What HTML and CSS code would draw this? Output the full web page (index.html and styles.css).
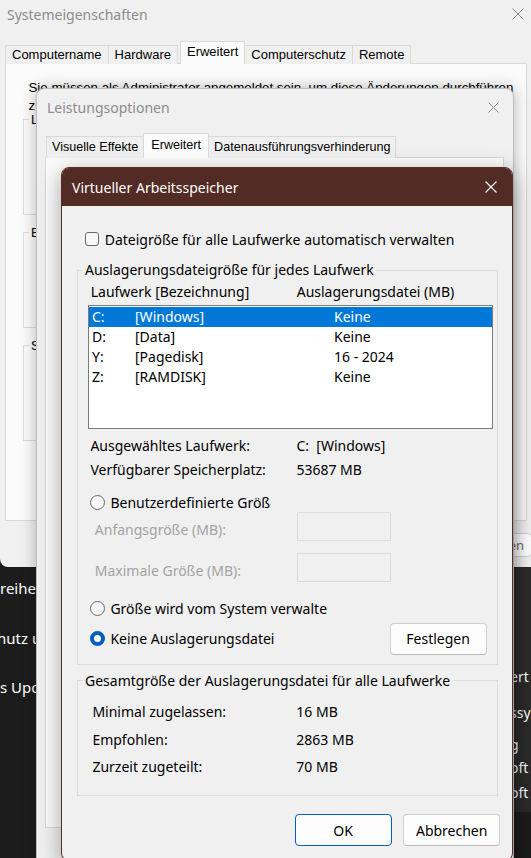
FILE: index.html
```html
<!DOCTYPE html>
<html lang="de">
<head>
<meta charset="utf-8">
<title>Virtueller Arbeitsspeicher</title>
<link rel="stylesheet" href="styles.css">
</head>
<body>
<div class="desk-left">
  <div class="dl-line">reihe</div>
  <div class="dl-line shift">hutz u</div>
  <div class="dl-line">s Upo</div>
</div>
<div class="desk-right">
  <div class="dr-panel">
    <div class="dr-line l1">ert</div>
    <div class="dr-line l2">ssy</div>
    <div class="dr-line l3">g</div>
    <div class="dr-line l4">oft</div>
    <div class="dr-line l5">oft</div>
  </div>
</div>

<div class="w1">
  <div class="w1-title">
    <span>Systemeigenschaften</span>
    <svg class="xicon" width="12" height="12" viewBox="0 0 12 12"><path d="M0.5 0.5L11.5 11.5M11.5 0.5L0.5 11.5" stroke="currentColor" stroke-width="1" fill="none"/></svg>
  </div>
  <div class="tabs w1-tabs">
    <div class="tab">Computername</div>
    <div class="tab">Hardware</div>
    <div class="tab sel">Erweitert</div>
    <div class="tab">Computerschutz</div>
    <div class="tab">Remote</div>
  </div>
  <div class="w1-panel">
    <p class="w1-note">Sie müssen als Administrator angemeldet sein, um diese Änderungen durchführen<br>zu</p>
    <fieldset class="w1-gb"><legend>L</legend></fieldset>
    <fieldset class="w1-gb"><legend>E</legend></fieldset>
    <fieldset class="w1-gb"><legend>S</legend></fieldset>
  </div>
  <div class="w1-buttons"><div class="w1-btn">Übernehmen</div></div>
</div>

<div class="w2">
  <div class="w2-title">
    <span>Leistungsoptionen</span>
    <svg class="xicon" width="11" height="11" viewBox="0 0 11 11"><path d="M0.5 0.5L10.5 10.5M10.5 0.5L0.5 10.5" stroke="currentColor" stroke-width="1" fill="none"/></svg>
  </div>
  <div class="tabs w2-tabs">
    <div class="tab">Visuelle Effekte</div>
    <div class="tab sel">Erweitert</div>
    <div class="tab">Datenausführungsverhinderung</div>
  </div>
  <div class="w2-panel"></div>
</div>

<div class="w3">
  <div class="w3-title">
    <span>Virtueller Arbeitsspeicher</span>
    <svg class="xicon" width="12" height="12" viewBox="0 0 12 12"><path d="M0.5 0.5L11.5 11.5M11.5 0.5L0.5 11.5" stroke="currentColor" stroke-width="1.1" fill="none"/></svg>
  </div>
  <div class="w3-body">
    <div class="chk-row"><span class="checkbox"></span><span>Dateigröße für alle Laufwerke automatisch verwalten</span></div>

    <fieldset class="gb gb1">
      <legend>Auslagerungsdateigröße für jedes Laufwerk</legend>
      <div class="gb1-in">
        <div class="lv-head"><span class="c1">Laufwerk [Bezeichnung]</span><span>Auslagerungsdatei (MB)</span></div>
        <div class="listbox">
          <div class="lv-row sel"><span class="d">C:</span><span class="n">[Windows]</span><span>Keine</span></div>
          <div class="lv-row"><span class="d">D:</span><span class="n">[Data]</span><span>Keine</span></div>
          <div class="lv-row"><span class="d">Y:</span><span class="n">[Pagedisk]</span><span>16 - 2024</span></div>
          <div class="lv-row"><span class="d">Z:</span><span class="n">[RAMDISK]</span><span>Keine</span></div>
        </div>
        <div class="info">
          <div class="kv"><span class="k">Ausgewähltes Laufwerk:</span><span>C:&nbsp; [Windows]</span></div>
          <div class="kv"><span class="k">Verfügbarer Speicherplatz:</span><span>53687 MB</span></div>
        </div>
        <div class="radio-row r1"><span class="radio"></span><span>Benutzerdefinierte Größe:</span></div>
        <div class="size-row"><span class="lbl">Anfangsgröße (MB):</span><span class="inp"></span></div>
        <div class="size-row s2"><span class="lbl">Maximale Größe (MB):</span><span class="inp"></span></div>
        <div class="radio-row r2"><span class="radio"></span><span>Größe wird vom System verwaltet</span></div>
        <div class="opt3">
          <div class="radio-row"><span class="radio on"></span><span>Keine Auslagerungsdatei</span></div>
          <div class="btn set">Festlegen</div>
        </div>
      </div>
    </fieldset>

    <fieldset class="gb gb2">
      <legend>Gesamtgröße der Auslagerungsdatei für alle Laufwerke</legend>
      <div class="gb2-in">
        <div class="kv"><span class="k">Minimal zugelassen:</span><span>16 MB</span></div>
        <div class="kv"><span class="k">Empfohlen:</span><span>2863 MB</span></div>
        <div class="kv"><span class="k">Zurzeit zugeteilt:</span><span>70 MB</span></div>
      </div>
    </fieldset>

    <div class="dlg-btns">
      <div class="btn default">OK</div>
      <div class="btn">Abbrechen</div>
    </div>
  </div>
</div>
</body>
</html>
```

FILE: styles.css
```css
* { box-sizing: border-box; }
html, body { margin: 0; padding: 0; }
body {
  position: relative;
  width: 531px;
  height: 858px;
  overflow: hidden;
  background: #1c1c1c;
  font-family: "Noto Sans", "Open Sans", sans-serif;
  font-size: 14px;
  color: #000;
}

/* background desktop app (dark) */
.desk-left {
  position: absolute;
  left: 0;
  top: 567px;
  width: 40px;
  height: 291px;
  padding-top: 11px;
  color: #fff;
  font-size: 15px;
  line-height: 20px;
  white-space: nowrap;
  overflow: hidden;
}
.dl-line { height: 49.5px; }
.dl-line.shift { margin-left: -3px; }

.desk-right {
  position: absolute;
  left: 505px;
  top: 567px;
  width: 26px;
  height: 291px;
  background: #1c1c1c;
}
.dr-panel {
  height: 245px;
  background: #2b2b2b;
  padding: 100px 0 0 5px;
  color: #fff;
  font-size: 14px;
  line-height: 20px;
  white-space: nowrap;
  overflow: hidden;
}
.dr-line.l2 { margin-top: 16px; }
.dr-line.l3 { margin-top: 12px; }
.dr-line.l4 { margin-top: 3px; }
.dr-line.l5 { margin-top: 5px; }

/* generic */
.xicon { display: block; flex: none; }
.tabs { display: flex; align-items: flex-end; }
.tab {
  height: 19px;
  line-height: 18px;
  padding: 0 6px;
  border: 1px solid #d9d9d9;
  border-bottom: 0;
  background: #f0f0f0;
  margin-left: -1px;
  white-space: nowrap;
  font-family: "Liberation Sans", Arial, sans-serif;
}
.tab:first-child { margin-left: 0; }
.tab.sel {
  position: relative;
  z-index: 1;
  height: 23px;
  line-height: 20px;
  background: #fbfbfb;
  margin-left: 2px;
}

/* window 1: Systemeigenschaften */
.w1 {
  position: absolute;
  left: 0;
  top: 0;
  width: 540px;
  height: 567px;
  background: #f0f0f0;
  border-radius: 0 0 8px 8px;
  font-family: "Liberation Sans", Arial, sans-serif;
  font-size: 13px;
}
.w1-title {
  height: 28px;
  display: flex;
  align-items: center;
  justify-content: space-between;
  padding: 0 16px 0 7px;
  color: #8c8c8c;
  font-family: "Noto Sans", sans-serif;
  font-size: 14px;
}
.w1-tabs { margin: 13px 0 -1px 5px; height: 23px; font-size: 13px; }
.w1-panel {
  margin: 0 13px 0 5px;
  height: 458px;
  border: 1px solid #d9d9d9;
  background: #fbfbfb;
  padding: 15px 0 0 17px;
}
.w1-note {
  margin: 0 0 -13.5px 5.5px;
  line-height: 18px;
  font-size: 13.3px;
  white-space: nowrap;
}
.w1-gb {
  margin: 10px 0 0 0;
  padding: 0;
  width: 480px;
  height: 103px;
  border: 1px solid #dcdcdc;
  min-inline-size: 0;
}
.w1-gb legend { margin-left: 5px; padding: 0 2px; line-height: 15px; font-size: 13px; }
.w1-buttons { display: flex; justify-content: flex-end; padding: 12px 8px 0 0; }
.w1-btn {
  width: 90px;
  height: 24px;
  border: 1px solid #d0d0d0;
  border-radius: 4px;
  background: #fdfdfd;
  text-align: right;
  padding-right: 9px;
  line-height: 22px;
  color: #6a6a6a;
  font-family: "Noto Sans", sans-serif;
  font-size: 13px;
}

/* window 2: Leistungsoptionen */
.w2 {
  position: absolute;
  left: 36px;
  top: 88px;
  width: 478px;
  height: 800px;
  background: #f0f0f0;
  border: 1px solid #bdbdbd;
  border-radius: 8px;
  box-shadow: 0 0 16px rgba(0, 0, 0, 0.28);
}
.w2-title {
  height: 36px;
  display: flex;
  align-items: center;
  justify-content: space-between;
  padding: 0 14px 0 10px;
  color: #8c8c8c;
  font-size: 14px;
}
.w2-tabs { margin: 8px 0 -1px 9px; height: 25px; font-size: 12.6px; }
.w2-tabs .tab { height: 22px; line-height: 21px; padding: 0 5px; }
.w2-tabs .tab.sel { height: 25px; line-height: 23px; margin-left: -1px; padding: 0 7px; }
.w2-panel {
  margin: 0 9px 0 8px;
  height: 671px;
  border: 1px solid #d9d9d9;
  background: #fbfbfb;
}

/* window 3: Virtueller Arbeitsspeicher */
.w3 {
  position: absolute;
  left: 61px;
  top: 167px;
  width: 452px;
  height: 694px;
  background: #f0f0f0;
  border: 1px solid #5a2f27;
  border-radius: 8px;
  overflow: hidden;
  box-shadow: 0 6px 22px rgba(0, 0, 0, 0.35);
}
.w3-title {
  height: 38px;
  background: #522c24;
  color: #fff;
  display: flex;
  align-items: center;
  justify-content: space-between;
  padding: 0 15px 0 10px;
  font-size: 14px;
}
.w3-body { padding: 0 14px 0 15px; }

.chk-row {
  display: flex;
  align-items: center;
  gap: 6px;
  height: 20px;
  margin-top: 23px;
  padding-left: 7.7px;
  white-space: nowrap;
}
.checkbox {
  flex: none;
  width: 14px;
  height: 14px;
  border: 1px solid #6b6b6b;
  border-radius: 3px;
  background: #f7f7f7;
}

.gb {
  margin: 11px 0 0 0;
  padding: 0;
  border: 1px solid #dcdcdc;
  min-inline-size: 0;
}
.gb legend { margin-left: 5px; padding: 0 2px; line-height: 20px; font-size: 14px; }
.gb1-in { padding: 2px 3.7px 9.3px 10px; }

.lv-head { display: flex; line-height: 20px; padding-left: 2.7px; white-space: nowrap; }
.lv-head .c1 { width: 206px; }
.listbox {
  margin-top: 3px;
  width: 405px;
  height: 123.5px;
  border: 1px solid #7a7a7a;
  background: #fff;
  padding: 0.5px 0;
}
.lv-row { display: flex; height: 20px; line-height: 20px; white-space: nowrap; }
.lv-row.sel { background: #0078d7; color: #fff; }
.lv-row .d { width: 46px; padding-left: 3px; }
.lv-row .n { width: 199px; }

.info { margin-top: 7px; display: flex; flex-direction: column; gap: 4.4px; padding-left: 2.4px; }
.kv { display: flex; line-height: 20px; white-space: nowrap; }
.kv .k { width: 206px; }

.radio-row {
  display: flex;
  align-items: center;
  gap: 5px;
  height: 20px;
  margin-left: 2.4px;
  white-space: nowrap;
  overflow: hidden;
}
.radio {
  flex: none;
  width: 15px;
  height: 15px;
  border: 1px solid #6b6b6b;
  border-radius: 50%;
  background: #f7f7f7;
}
.radio.on {
  border: 4.5px solid #005fb8;
  background: #fff;
}
.r1 { margin-top: 12.2px; width: 180.6px; }
.r2 { margin-top: 16.6px; width: 237px; }

.size-row { display: flex; align-items: flex-start; height: 29px; color: #a3a3a3; }
.size-row.s2 { margin-top: 12px; }
.size-row .lbl { width: 209px; padding-left: 6.8px; margin-top: 8.2px; line-height: 20px; white-space: nowrap; }
.inp { width: 94px; height: 29px; border: 1px solid #dcdcdc; background: #f0f0f0; }

.opt3 {
  display: flex;
  align-items: center;
  justify-content: space-between;
  height: 32px;
  margin-top: 4px;
}
.btn {
  width: 97px;
  height: 32px;
  border: 1px solid #d0d0d0;
  border-bottom-color: #bcbcbc;
  border-radius: 4px;
  background: #fdfdfd;
  display: flex;
  align-items: center;
  justify-content: center;
}
.btn.set { margin-right: 6.7px; }
.btn.default { border-color: #005fb8; }

.gb2 { margin-top: 6px; }
.gb2-in { padding: 11px 0 18px 14.4px; display: flex; flex-direction: column; gap: 7.75px; }
.gb2-in .kv .k { width: 203.9px; }

.dlg-btns {
  display: flex;
  justify-content: flex-end;
  gap: 11.6px;
  margin: 17.6px -2.2px 0 0;
}
```
